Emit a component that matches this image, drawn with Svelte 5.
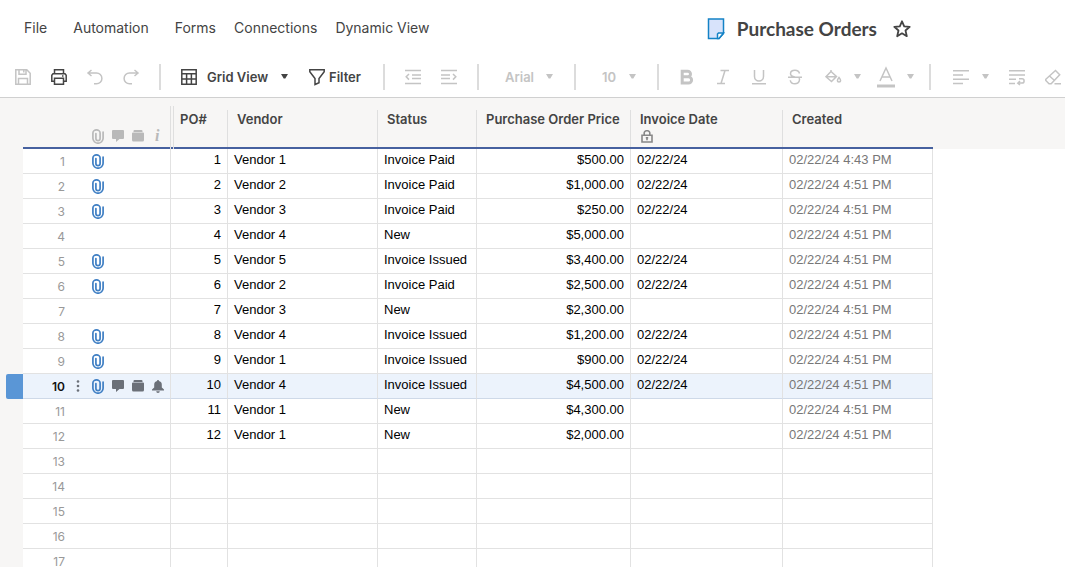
<script>
  const menus = ['File', 'Automation', 'Forms', 'Connections', 'Dynamic View'];

  const orders = [
    ['Vendor 1', 'Invoice Paid', '$500.00', '02/22/24', '4:43 PM', true],
    ['Vendor 2', 'Invoice Paid', '$1,000.00', '02/22/24', '4:51 PM', true],
    ['Vendor 3', 'Invoice Paid', '$250.00', '02/22/24', '4:51 PM', true],
    ['Vendor 4', 'New', '$5,000.00', '', '4:51 PM', false],
    ['Vendor 5', 'Invoice Issued', '$3,400.00', '02/22/24', '4:51 PM', true],
    ['Vendor 2', 'Invoice Paid', '$2,500.00', '02/22/24', '4:51 PM', true],
    ['Vendor 3', 'New', '$2,300.00', '', '4:51 PM', false],
    ['Vendor 4', 'Invoice Issued', '$1,200.00', '02/22/24', '4:51 PM', true],
    ['Vendor 1', 'Invoice Issued', '$900.00', '02/22/24', '4:51 PM', true],
    ['Vendor 4', 'Invoice Issued', '$4,500.00', '02/22/24', '4:51 PM', true],
    ['Vendor 1', 'New', '$4,300.00', '', '4:51 PM', false],
    ['Vendor 1', 'New', '$2,000.00', '', '4:51 PM', false]
  ];

  const rows = Array.from({ length: 17 }, (_, i) => {
    const o = orders[i];
    return {
      n: i + 1,
      po: o ? i + 1 : '',
      vendor: o?.[0] ?? '',
      status: o?.[1] ?? '',
      price: o?.[2] ?? '',
      date: o?.[3] ?? '',
      created: o ? `02/22/24 ${o[4]}` : '',
      attached: o?.[5] ?? false
    };
  });

  let selected = $state(10);
</script>

{#snippet caret()}
  <svg class="caret" width="7" height="5" viewBox="0 0 7 5" aria-hidden="true"><path d="M0 0h7L4.300 4.500H2.700z" fill="currentColor" /></svg>
{/snippet}

{#snippet clip()}
  <svg width="12" height="15" viewBox="0 0 12 15" fill="none" stroke="currentColor" stroke-width="1.700" stroke-linecap="round" aria-hidden="true">
    <path d="M11.100 3v6.200a5.100 5 0 0 1-10.200 0V4a3.600 3.100 0 0 1 7.200 0v5.500a2.100 2.200 0 0 1-4.200 0V4.500" />
  </svg>
{/snippet}

{#snippet comment()}
  <svg width="12" height="12" viewBox="0 0 12 12" fill="currentColor" aria-hidden="true"><path d="M1 0h10a1 1 0 0 1 1 1v7a1 1 0 0 1-1 1H7.500L4 12V9H1a1 1 0 0 1-1-1V1a1 1 0 0 1 1-1z" /></svg>
{/snippet}

{#snippet proof()}
  <svg width="12" height="12" viewBox="0 0 12 12" fill="currentColor" aria-hidden="true"><path d="M2.500 0h7a1 1 0 0 1 1 1v1h-9V1a1 1 0 0 1 1-1zM1 2.600h10a1 1 0 0 1 1 1v6.400A1.500 1.500 0 0 1 10.500 11.500h-9A1.500 1.500 0 0 1 0 10V3.600a1 1 0 0 1 1-1z" /></svg>
{/snippet}

<div class="app">
  <header>
    <nav>
      {#each menus as menu, i}
        <button class="menu" class:wide={i < 2}>{menu}</button>
      {/each}
    </nav>
    <div class="title">
      <svg width="18" height="22" viewBox="0 0 18 22" aria-hidden="true">
        <path d="M1.500 1h15v14.500l-4.500 5H1.500z" fill="#d8e3fb" stroke="#1482c6" stroke-width="1.500" />
        <path d="M10.500 20.500v-4.500l1-1H16.500l-4.500 5.500z" fill="#fff" stroke="#1482c6" stroke-width="1.500" />
      </svg>
      <h1>Purchase Orders</h1>
      <button class="star" aria-label="Favorite">
        <svg width="18" height="18" viewBox="0 0 18 18" fill="none" stroke="#444" stroke-width="1.800" stroke-linejoin="round"><path d="M9 1.300l2.200 5 5.500.5-4.200 3.700 1.300 5.700L9 13.300l-4.800 2.900 1.300-5.700L1.300 6.800l5.500-.5z" /></svg>
      </button>
    </div>
  </header>

  <div class="toolbar">
    <button class="tool" disabled aria-label="Save">
      <svg width="18" height="18" viewBox="0 0 18 18"><path d="M1.800 1.800h11l3.400 3.400v11H1.800zM5 1.800v4.400h7V1.800M9.800 2v2.500M4.500 16v-5.500h9V16" /></svg>
    </button>
    <button class="tool dark" aria-label="Print">
      <svg width="18" height="18" viewBox="0 0 18 18"><path d="M4.500 5.500V1.800h9v3.700M4.500 13.200H1.800v-6l1.200-1.500h12l1.200 1.500v6h-2.700M4.500 10.200h9v6h-9zM12 8h1.500" /></svg>
    </button>
    <button class="tool" disabled aria-label="Undo">
      <svg width="18" height="18" viewBox="0 0 18 18"><path d="M5.500 2L2 5l3.500 3M2 5h8.500a5.400 5.400 0 0 1 0 10.800H8" /></svg>
    </button>
    <button class="tool" disabled aria-label="Redo">
      <svg width="18" height="18" viewBox="0 0 18 18"><path d="M12.500 2L16 5l-3.500 3M16 5H7.500a5.400 5.400 0 0 0 0 10.800H10" /></svg>
    </button>
    <i class="sep"></i>
    <div class="pick view">
      <svg width="18" height="18" viewBox="0 0 18 18"><path d="M1.800 1.800h14.400v14.400H1.800zM1.800 5.800h14.400M1.800 11h14.400M6.600 5.800v10.400M11.400 5.800v10.400" /></svg>
      <select aria-label="View"><option>Grid View</option></select>
      {@render caret()}
    </div>
    <button class="filter">
      <svg width="18" height="18" viewBox="0 0 18 18"><path d="M1.800 1.800h14.400v2L11 10.500v4.200l-4 1.800v-6L1.800 3.800z" /></svg>
      Filter
    </button>
    <i class="sep"></i>
    <button class="tool" disabled aria-label="Outdent">
      <svg width="18" height="18" viewBox="0 0 18 18"><path d="M1 2.500h16M8 7h9M8 10.500h9M1 15.500h16M5 6L2.200 8.800 5 11.600" /></svg>
    </button>
    <button class="tool" disabled aria-label="Indent">
      <svg width="18" height="18" viewBox="0 0 18 18"><path d="M1 2.500h16M1 7h9M1 10.500h9M1 15.500h16M13 6l2.800 2.800L13 11.600" /></svg>
    </button>
    <i class="sep"></i>
    <div class="pick font">
      <select aria-label="Font" disabled><option>Arial</option></select>
      {@render caret()}
    </div>
    <i class="sep"></i>
    <div class="pick size">
      <select aria-label="Font size" disabled><option>10</option></select>
      {@render caret()}
    </div>
    <i class="sep"></i>
    <button class="tool" disabled aria-label="Bold">
      <svg width="18" height="18" viewBox="0 0 18 18"><path class="heavy" d="M4.200 3.200h5.500a2.800 2.800 0 0 1 0 5.600H4.200zM4.200 8.800h6.300a3.100 3.100 0 0 1 0 6.200H4.200z" /></svg>
    </button>
    <button class="tool" disabled aria-label="Italic">
      <svg width="18" height="18" viewBox="0 0 18 18"><path d="M6.500 2.500H15M3 15.500h8M11 2.500l-4 13" /></svg>
    </button>
    <button class="tool" disabled aria-label="Underline">
      <svg width="18" height="18" viewBox="0 0 18 18"><path d="M4.500 2v6.500a4.500 4.500 0 0 0 9 0V2M2 15.700h14" /></svg>
    </button>
    <button class="tool" disabled aria-label="Strikethrough">
      <svg width="18" height="18" viewBox="0 0 18 18"><path d="M13.500 5.500C13 3 11.500 2.300 9 2.300S4.500 3.500 4.500 5.700C4.500 8 7 8.500 9 9M2 9.300h14M13 10c1 1.200.8 5.700-4 5.700-2.700 0-4.500-1.200-4.700-3.500" /></svg>
    </button>
    <button class="tool split" disabled aria-label="Fill color">
      <svg width="18" height="18" viewBox="0 0 18 18"><path d="M7 2v1.500L2 8.700l5.500 4.800 5-5L7 3.500M2.500 8.700h10M15 9.500c-2.300 2.800-2 4.500 0 4.500s2.300-1.700 0-4.500z" /></svg>
      {@render caret()}
    </button>
    <button class="tool split" disabled aria-label="Text color">
      <svg width="18" height="22" viewBox="0 0 18 22"><path d="M3 15L9 2l6 13M5 11h8" /><path d="M0 20h18" class="heavy" /></svg>
      {@render caret()}
    </button>
    <i class="sep"></i>
    <button class="tool split align" disabled aria-label="Align">
      <svg width="18" height="18" viewBox="0 0 18 18"><path d="M1 2.700h16M1 7h10M1 11.300h16M1 15.500h10" /></svg>
      {@render caret()}
    </button>
    <button class="tool" disabled aria-label="Wrap text">
      <svg width="18" height="18" viewBox="0 0 18 18"><path d="M1 2.700h16M1 7h16M1 11.300h7M1 15.500h6M11 10.800h3a2.100 2.100 0 0 1 0 4.200h-4M12 13l-2.200 2.100L12 17" /></svg>
    </button>
    <button class="tool" disabled aria-label="Clear format">
      <svg width="18" height="18" viewBox="0 0 18 18"><path d="M11.500 2.500l4.200 4.200-8.500 9H5L1.800 12.500v-1.200zM5.500 8l5 4.500M10.500 15.700H17" /></svg>
    </button>
  </div>

  <main>
    <table>
      <colgroup>
        <col class="c-gutter" /><col class="c-meta" /><col class="c-po" /><col class="c-vendor" /><col class="c-status" />
        <col class="c-price" /><col class="c-date" /><col class="c-created" /><col />
      </colgroup>
      <thead>
        <tr>
          <td></td>
          <th class="line" aria-label="Row indicators">
            <div class="head tall">
              <div class="icons">
                {@render clip()}{@render comment()}{@render proof()}
                <span class="info">i</span>
              </div>
            </div>
          </th>
          <th class="line"><div class="frozen"><div class="head">PO#</div></div></th>
          <th class="line"><div class="head">Vendor</div></th>
          <th class="line"><div class="head">Status</div></th>
          <th class="line"><div class="head">Purchase Order Price</div></th>
          <th class="line">
            <div class="head">
              Invoice Date
              <svg class="lock" width="12" height="13" viewBox="0 0 12 13" fill="none" stroke="#888" stroke-width="1.600" aria-hidden="true"><path d="M1 5.200h10v6.800H1zM3.200 5V3a2.200 2.200 0 0 1 2.200-2.200h1.200A2.200 2.200 0 0 1 8.800 3v2M4.800 7.800h2.400M6 7v3.200" /></svg>
            </div>
          </th>
          <th class="line"><div class="head last">Created</div></th>
          <td></td>
        </tr>
      </thead>
      <tbody>
        {#each rows as r}
          <tr class:selected={r.n === selected} onclick={() => (selected = r.n)}>
            <td class="gutter"><span></span></td>
            <td class="cell">
              <div class="meta">
                <span class="num">{r.n}</span>
                <span class="dots">
                  {#if r.n === selected}
                    <svg width="4" height="12" viewBox="0 0 4 12" fill="currentColor" aria-hidden="true"><circle cx="2" cy="1.500" r="1.300" /><circle cx="2" cy="6" r="1.300" /><circle cx="2" cy="10.500" r="1.300" /></svg>
                  {/if}
                </span>
                <div class="icons">
                  {#if r.attached}<span class="blue">{@render clip()}</span>{/if}
                  {#if r.n === selected}
                    {@render comment()}{@render proof()}
                    <svg width="12" height="13" viewBox="0 0 12 13" fill="currentColor" aria-hidden="true"><path d="M5.200 0h1.600v1A3.700 3.700 0 0 1 9.800 4.700V7.500L12 9.500v1H0v-1l2.200-2V4.700A3.700 3.700 0 0 1 5.200 1zM4.200 11.300h3.600a1.800 1.600 0 0 1-3.600 0z" /></svg>
                  {/if}
                </div>
              </div>
            </td>
            <td class="cell right">{r.po}</td>
            <td class="cell">{r.vendor}</td>
            <td class="cell">{r.status}</td>
            <td class="cell right">{r.price}</td>
            <td class="cell">{r.date}</td>
            <td class="cell created">{r.created}</td>
            <td></td>
          </tr>
        {/each}
      </tbody>
    </table>
  </main>
</div>

<style>
  :global(body) { background: #fff; }
  .app {
    height: 100vh;
    overflow: hidden;
    display: flex;
    flex-direction: column;
    font-family: Inter, sans-serif;
    color: #444;
  }
  button, select {
    appearance: none;
    border: 0;
    padding: 0;
    margin: 0;
    background: none;
    font: inherit;
    color: inherit;
    opacity: 1;
  }
  svg { display: block; flex: none; }

  header { flex: none; display: flex; align-items: center; height: 56px; padding-left: 24px; font-size: 14px; }
  header::after { content: ''; flex: 5; }
  nav { display: flex; gap: 18px; flex: 9 0 auto; padding-bottom: 2px; }
  .menu { white-space: nowrap; }
  .menu.wide { margin-right: 8px; }
  .title { display: flex; align-items: center; flex: none; margin-top: 2px; }
  h1 { margin: 0 16px 0 12px; font-family: Lato, sans-serif; font-size: 19px; line-height: 24px; font-weight: 700; white-space: nowrap; }

  .toolbar {
    flex: none;
    display: flex;
    align-items: center;
    height: 41px;
    padding-left: 5px;
    border-bottom: 1px solid #d0d0d0;
    font-size: 13px;
    font-weight: 600;
    overflow: hidden;
  }
  .toolbar svg:not(.caret) { fill: none; stroke: currentColor; stroke-width: 1.500; }
  .toolbar .heavy { stroke-width: 3; }
  .tool { flex: none; width: 36px; height: 36px; display: flex; align-items: center; justify-content: center; color: #c4c4c4; }
  .dark { color: #444; }
  .split { width: 53px; gap: 12px; padding-left: 5px; }
  .align { margin-right: 5px; }
  .sep { flex: none; width: 2px; height: 26px; margin: 0 10px; background: #dcdcdc; }
  .pick { flex: none; box-sizing: border-box; display: flex; align-items: center; position: relative; }
  .pick select { flex: 1; height: 36px; }
  .pick .caret { position: absolute; right: 11px; pointer-events: none; }
  .view { width: 128px; padding-left: 9px; gap: 9px; }
  .filter { flex: none; display: flex; align-items: center; gap: 3px; width: 74px; padding-left: 9px; }
  .font { width: 75px; padding-left: 16px; color: #c4c4c4; }
  .size { width: 61px; padding-left: 16px; color: #c4c4c4; }

  main { flex: 1; min-height: 0; overflow: hidden; }
  table { width: 100%; table-layout: fixed; border-collapse: separate; border-spacing: 0; }
  .c-gutter { width: 23px; }
  .c-meta { width: 148px; }
  .c-po { width: 57px; }
  .c-vendor, .c-created { width: 150px; }
  .c-status { width: 99px; }
  .c-price { width: 154px; }
  .c-date { width: 152px; }
  th, td { padding: 0; }
  thead { background: #f7f6f5; }
  .line { border-bottom: 2px solid #47619f; vertical-align: bottom; height: 49px; }
  .head {
    height: 37px;
    padding: 1px 0 0 9px;
    box-sizing: border-box;
    border-right: 1px solid #dfdfdf;
    text-align: left;
    font-size: 13px;
    line-height: 16px;
    font-weight: 600;
    white-space: nowrap;
  }
  .head.last { border-color: transparent; }
  .head.tall { height: 43px; margin-bottom: -2px; padding: 22px 0 0 69px; color: #b9b9b9; }
  .frozen { height: 43px; margin: 0 0 -2px 2px; padding: 4px 0 2px; box-sizing: border-box; border-left: 1px solid #dfdfdf; }
  .frozen .head { padding-left: 6px; }
  .lock { margin: 3px 0 0 1px; }
  .icons { display: flex; align-items: center; gap: 8px; }
  .info { font: italic 700 16px/16px "Liberation Serif", serif; margin-left: 3px; }

  tbody tr { height: 25px; }
  .gutter { background: #f7f6f5; }
  .gutter span { display: block; height: 25px; }
  .cell {
    height: 24px;
    padding: 0 6px;
    border-right: 1px solid #e2e2e2;
    border-bottom: 1px solid #e2e2e2;
    font-family: "Liberation Sans", Arial, sans-serif;
    font-size: 13px;
    line-height: 22px;
    color: #000;
    white-space: nowrap;
    vertical-align: top;
  }
  .right { text-align: right; }
  .cell.created { color: #777; }
  .meta { display: flex; align-items: center; height: 24px; color: #6b7078; }
  .num { width: 36px; padding-top: 2px; text-align: right; font: 12px/22px Inter, sans-serif; color: #999; }
  .dots { box-sizing: border-box; width: 27px; padding-left: 11px; }
  .blue { color: #3f7fc4; }
  .selected .cell { background: #ecf3fc; border-bottom-color: #ced9e8; }
  .selected .num { font-weight: 600; color: #111; }
  .selected .gutter span { margin-left: 6px; background: #5a96d6; border-radius: 2px 0 0 2px; }
</style>
